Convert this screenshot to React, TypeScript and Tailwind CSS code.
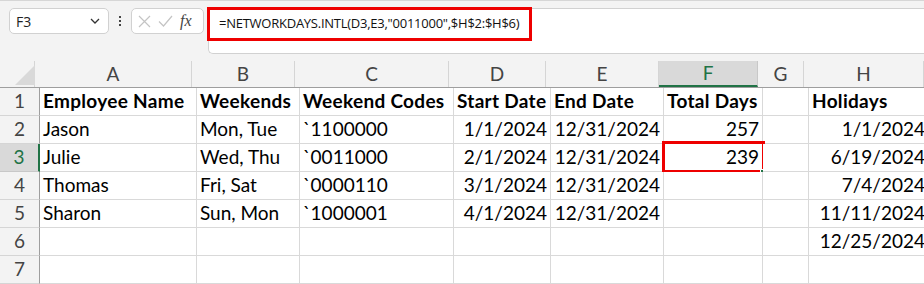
import React from "react";

const cols = [
  { key: "A", w: 157 },
  { key: "B", w: 103 },
  { key: "C", w: 154 },
  { key: "D", w: 97 },
  { key: "E", w: 113 },
  { key: "F", w: 99 },
  { key: "G", w: 46 },
  { key: "H", w: 120 },
];

type Cell = { t: string; right?: boolean; bold?: boolean };

const rows: Cell[][] = [
  [
    { t: "Employee Name", bold: true },
    { t: "Weekends", bold: true },
    { t: "Weekend Codes", bold: true },
    { t: "Start Date", bold: true },
    { t: "End Date", bold: true },
    { t: "Total Days", bold: true },
    { t: "" },
    { t: "Holidays", bold: true },
  ],
  [
    { t: "Jason" },
    { t: "Mon, Tue" },
    { t: "`1100000" },
    { t: "1/1/2024", right: true },
    { t: "12/31/2024", right: true },
    { t: "257", right: true },
    { t: "" },
    { t: "1/1/2024", right: true },
  ],
  [
    { t: "Julie" },
    { t: "Wed, Thu" },
    { t: "`0011000" },
    { t: "2/1/2024", right: true },
    { t: "12/31/2024", right: true },
    { t: "239", right: true },
    { t: "" },
    { t: "6/19/2024", right: true },
  ],
  [
    { t: "Thomas" },
    { t: "Fri, Sat" },
    { t: "`0000110" },
    { t: "3/1/2024", right: true },
    { t: "12/31/2024", right: true },
    { t: "" },
    { t: "" },
    { t: "7/4/2024", right: true },
  ],
  [
    { t: "Sharon" },
    { t: "Sun, Mon" },
    { t: "`1000001" },
    { t: "4/1/2024", right: true },
    { t: "12/31/2024", right: true },
    { t: "" },
    { t: "" },
    { t: "11/11/2024", right: true },
  ],
  [
    { t: "" },
    { t: "" },
    { t: "" },
    { t: "" },
    { t: "" },
    { t: "" },
    { t: "" },
    { t: "12/25/2024", right: true },
  ],
  [{ t: "" }, { t: "" }, { t: "" }, { t: "" }, { t: "" }, { t: "" }, { t: "" }, { t: "" }],
];

const App: React.FC = () => {
  return (
    <div className="w-[924px] h-[284px] overflow-hidden bg-[#f3f3f3] font-['Lato',sans-serif] text-black">
      {/* formula bar */}
      <div className="h-[61px] border-t border-[#d6d6d6] flex items-start pt-[7px] pl-[9px]">
        <div className="w-[100px] h-[26px] bg-white border border-[#d1d1d1] rounded-[5px] flex items-center justify-between pl-[6px] pr-[8px] font-['Open_Sans',sans-serif] text-[14px] text-[#222]">
          <span>F3</span>
          <svg width="10" height="6" viewBox="0 0 10 6">
            <path d="M1 1l4 4 4-4" fill="none" stroke="#333" strokeWidth="1.3" />
          </svg>
        </div>
        <div className="w-[22px] h-[26px] flex flex-col items-center justify-center gap-[2px]">
          <span className="w-[2px] h-[2px] bg-[#444]" />
          <span className="w-[2px] h-[2px] bg-[#444]" />
          <span className="w-[2px] h-[2px] bg-[#444]" />
        </div>
        <div className="w-[73px] h-[26px] bg-white border border-[#d1d1d1] rounded-[5px] flex items-center pl-[6px] gap-[7px]">
          <svg width="13" height="13" viewBox="0 0 13 13">
            <path d="M1 1l11 11M12 1L1 12" stroke="#c4c4c4" strokeWidth="1.2" />
          </svg>
          <svg width="15" height="12" viewBox="0 0 15 12">
            <path d="M1 6.5l4.5 4.5L14 1" fill="none" stroke="#c4c4c4" strokeWidth="1.2" />
          </svg>
          <span className="font-['Liberation_Serif',serif] italic text-[16px] text-[#444] leading-none">fx</span>
        </div>
        <div className="relative ml-[4px] flex-1 h-[46px] bg-white border border-[#d1d1d1] border-r-0 rounded-l-[5px]">
          <div className="absolute left-[-2px] top-[-2px] w-[325px] h-[34px] border-[3px] border-[#ee0000] flex items-center pl-[9px] font-['Open_Sans',sans-serif] text-[13px] text-[#111] tracking-[-0.25px] whitespace-nowrap">
            =NETWORKDAYS.INTL(D3,E3,"0011000",$H$2:$H$6)
          </div>
        </div>
      </div>

      {/* column headers */}
      <div className="flex h-[27px] border-b border-[#9e9e9e]">
        <div className="w-[40px] border-r border-[#d5d5d5] relative">
          <svg className="absolute left-[15px] top-[4px]" width="20" height="20" viewBox="0 0 20 20">
            <path d="M20 0v20H0z" fill="#d9d9d9" />
          </svg>
        </div>
        {cols.map((c) =>
          c.key === "F" ? (
            <div
              key={c.key}
              style={{ width: c.w }}
              className="shrink-0 bg-[#d9d9d9] border-b-[2px] border-b-[#217346] border-r border-r-[#c8c8c8] flex items-center justify-center text-[19px] text-[#217346]"
            >
              {c.key}
            </div>
          ) : (
            <div
              key={c.key}
              style={{ width: c.w }}
              className="shrink-0 border-r border-[#d5d5d5] flex items-center justify-center text-[19px] text-[#444]"
            >
              {c.key}
            </div>
          )
        )}
      </div>

      {/* rows */}
      {rows.map((r, i) => (
        <div key={i} className="flex h-[28px]">
          {i === 2 ? (
            <div className="w-[40px] shrink-0 bg-[#d9d9d9] border-r-[2px] border-[#217346] border-b border-b-[#c8c8c8] flex items-center justify-center text-[19px] text-[#217346]">
              {i + 1}
            </div>
          ) : (
            <div className="w-[40px] shrink-0 border-r border-[#9e9e9e] border-b border-b-[#d5d5d5] flex items-center justify-center text-[19px] text-[#444]">
              {i + 1}
            </div>
          )}
          {r.map((c, j) => {
            const sel = i === 2 && j === 5;
            return (
              <div
                key={j}
                style={{ width: cols[j].w }}
                className={`relative shrink-0 bg-white border-r border-b border-[#d9d9d9] flex items-center px-[3px] text-[19px] whitespace-nowrap ${
                  c.right ? "justify-end" : "justify-start"
                } ${c.bold ? "font-bold tracking-[0.3px]" : ""}`}
              >
                {sel && (
                  <>
                    <div className="absolute left-[-2px] top-[-3px] right-[-3px] bottom-[-2px] border-[3px] border-[#ee0000]" />
                    <div className="absolute right-[-3px] bottom-[-3px] w-[5px] h-[5px] bg-[#217346] border border-white" />
                  </>
                )}
                <span className="relative">{c.t}</span>
              </div>
            );
          })}
        </div>
      ))}
    </div>
  );
};

export default App;
